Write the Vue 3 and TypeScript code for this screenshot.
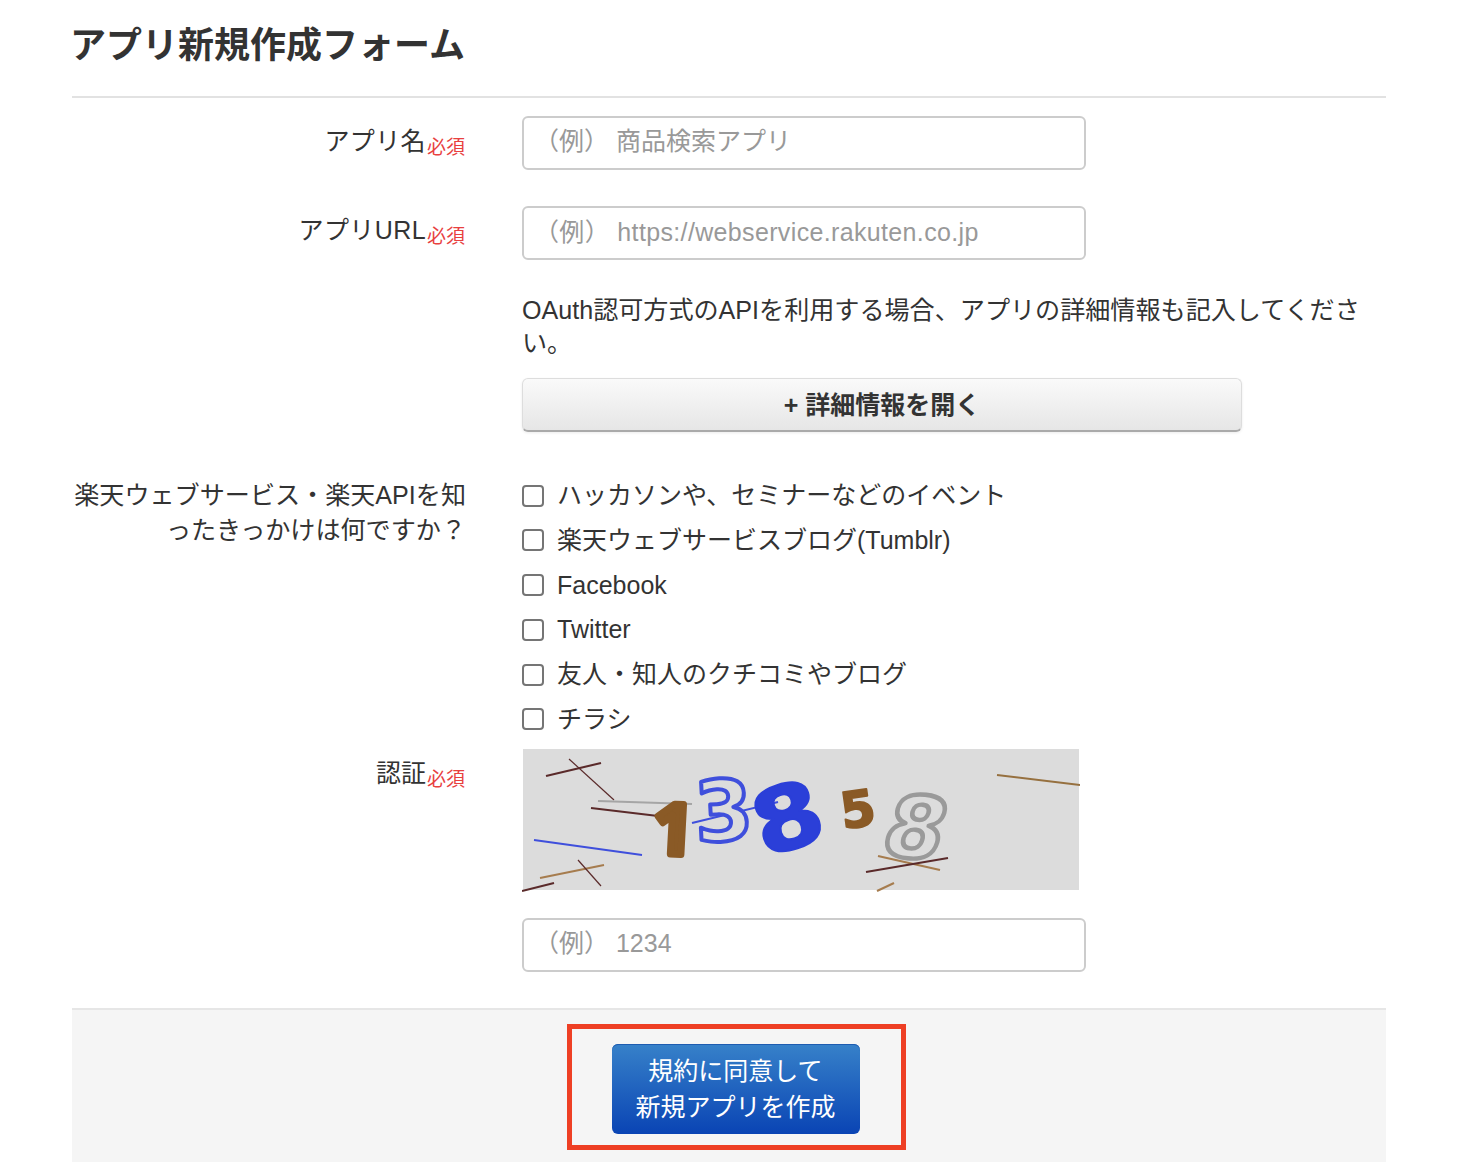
<script setup lang="ts">
const sources: string[] = [
  'ハッカソンや、セミナーなどのイベント',
  '楽天ウェブサービスブログ(Tumblr)',
  'Facebook',
  'Twitter',
  '友人・知人のクチコミやブログ',
  'チラシ',
]
const noise = [
  { d: 'M546 776 L601 763', c: '#5a2a2a', w: 2 },
  { d: 'M569 759 L614 800', c: '#5a2a2a', w: 1.2 },
  { d: 'M598 801 L692 804', c: '#a5a5a5', w: 2 },
  { d: 'M591 808 L658 816', c: '#5a2a2a', w: 2 },
  { d: 'M534 840 L642 855', c: '#3f4fdc', w: 2 },
  { d: 'M692 823 L778 802', c: '#3f4fdc', w: 2 },
  { d: 'M540 878 L604 865', c: '#a67c4e', w: 2 },
  { d: 'M578 860 L601 886', c: '#5a2a2a', w: 1.2 },
  { d: 'M522 891 L554 883', c: '#5a2a2a', w: 2 },
  { d: 'M997 775 L1080 785', c: '#96703f', w: 2 },
  { d: 'M878 856 L940 870', c: '#a67c4e', w: 2 },
  { d: 'M866 872 L948 858', c: '#5a2a2a', w: 2 },
  { d: 'M877 891 L894 883', c: '#a67c4e', w: 2 },
]
</script>

<template>
  <div class="page">
    <h1 class="title">アプリ新規作成フォーム</h1>

    <form class="form" @submit.prevent>
      <div class="row first">
        <label class="label wide">アプリ名<span class="req">必須</span></label>
        <div class="control"><input class="field" type="text" placeholder="（例） 商品検索アプリ" /></div>
      </div>

      <div class="row url">
        <label class="label wide url-label">アプリURL<span class="req">必須</span></label>
        <div class="control"><input class="field field-url" type="text" placeholder="（例） https://webservice.rakuten.co.jp" /></div>
      </div>

      <div class="row oauth">
        <div></div>
        <div class="control">
          <p class="note">OAuth認可方式のAPIを利用する場合、アプリの詳細情報も記入してください。</p>
          <button class="detail" type="button">+ 詳細情報を開く</button>
        </div>
      </div>

      <div class="row sources">
        <label class="label multi">楽天ウェブサービス・楽天APIを知ったきっかけは何ですか？</label>
        <div class="control checks">
          <label v-for="s in sources" :key="s" class="check">
            <input type="checkbox" class="box" />
            <span>{{ s }}</span>
          </label>
        </div>
      </div>

      <div class="row captcha-row">
        <label class="label captcha-label">認証<span class="req">必須</span></label>
        <div class="control">
          <svg class="captcha" viewBox="522 749 558 143" width="558" height="143" role="img" aria-label="認証画像">
            <rect x="523" y="749" width="556" height="141" fill="#dcdcdc" />
            <path v-for="(n, i) in noise" :key="i" :d="n.d" :stroke="n.c" :stroke-width="n.w" fill="none" />
            <text class="digit round sans" transform="translate(652 853) rotate(3)" font-size="70" fill="#8a5a26" stroke="#8a5a26" stroke-width="7">1</text>
            <text class="digit round" transform="translate(696 842) rotate(-3)" font-size="84" fill="#dcdcdc" stroke="#3f4fdc" stroke-width="4">3</text>
            <text class="digit round" transform="translate(764 858) rotate(-18) scale(1.14 1)" font-size="88" fill="#2b3fd8" stroke="#2b3fd8" stroke-width="2">8</text>
            <text class="digit round" transform="translate(843 829) rotate(-8)" font-size="50" fill="#8a5a26" stroke="#8a5a26" stroke-width="2">5</text>
            <text class="digit round" transform="translate(878 854) rotate(6) skewX(-10)" font-size="86" fill="#dcdcdc" stroke="#9a9a9a" stroke-width="4.5">8</text>
          </svg>
          <input class="field code" type="text" placeholder="（例） 1234" />
        </div>
      </div>

      <div class="footer">
        <div class="highlight">
          <button class="submit" type="submit">規約に同意して<br />新規アプリを作成</button>
        </div>
      </div>
    </form>
  </div>
</template>

<style>
html, body { margin: 0; background: #fff; }
</style>

<style scoped>
.page {
  height: 1162px;
  box-sizing: border-box;
  padding: 0 96px 0 72px;
  display: flex;
  flex-direction: column;
  overflow: hidden;
  color: #333;
  font-family: "Liberation Sans", "Noto Sans CJK JP", sans-serif;
  font-size: 25px;
}
.title {
  margin: 0 0 0 -2px;
  padding-top: 22px;
  height: 75px;
  box-sizing: border-box;
  font-size: 36px;
  line-height: 48px;
  font-weight: 700;
}
.form {
  flex: 1;
  display: flex;
  flex-direction: column;
  border-top: 2px solid #e2e2e2;
  margin-top: 21px;
}
.row {
  display: grid;
  grid-template-columns: 394px 1fr;
  column-gap: 56px;
}
.first { margin-top: 18px; }
.url { margin-top: 36px; }
.oauth { margin-top: 34px; }
.sources { margin-top: 45px; }
.captcha-row { margin-top: 12px; }
.label {
  text-align: right;
  line-height: 34px;
  padding-top: 8px;
  padding-right: 1px;
}
.label.wide { letter-spacing: 0.4px; }
.url-label { padding-top: 7px; }
.label.multi {
  padding: 1px 0 0;
  line-height: 35px;
  font-size: 25.1px;
}
.captcha-label { padding-top: 7px; }
.req {
  color: #e8403f;
  font-size: 19px;
  letter-spacing: 0;
  margin-left: 1px;
  position: relative;
  top: 4px;
}
.field {
  display: block;
  box-sizing: border-box;
  width: 564px;
  height: 54px;
  padding: 0 12px 3px 10px;
  border: 2px solid #ccc;
  border-radius: 6px;
  background: #fff;
  color: #333;
  font: inherit;
  outline: none;
}
.field-url {
  letter-spacing: 0.35px;
  padding-bottom: 1px;
}
.field::placeholder { color: #999; opacity: 1; }
.note {
  margin: 0;
  line-height: 33px;
  font-size: 25.1px;
}
.detail {
  display: block;
  width: 720px;
  height: 54px;
  margin-top: 18px;
  padding: 0 0 4px;
  border: 1px solid #ddd;
  border-bottom: 2px solid #aaa;
  border-radius: 6px;
  background: linear-gradient(#fafafa, #e6e6e6);
  box-shadow: 0 1px 3px rgba(0, 0, 0, 0.08);
  color: #333;
  font: inherit;
  font-weight: 700;
}
.checks {
  display: flex;
  flex-direction: column;
  gap: 8.8px;
}
.check {
  display: flex;
  align-items: center;
  gap: 13px;
  height: 36px;
  line-height: 36px;
}
.box {
  appearance: none;
  width: 22px;
  height: 22px;
  margin: 1px 0 0;
  box-sizing: border-box;
  border: 2px solid #757575;
  border-radius: 4px;
  background: #fff;
  flex: none;
}
.captcha { display: block; }
.code { margin-top: 26px; }
.footer {
  flex: 1;
  margin-top: 36px;
  border-top: 2px solid #e6e6e6;
  background: #f5f5f5;
  display: flex;
  justify-content: center;
  align-items: flex-start;
  padding: 14px 0 0 15px;
}
.highlight {
  box-sizing: border-box;
  width: 339px;
  height: 126px;
  border: 5px solid #ee3f24;
  display: flex;
  align-items: center;
  justify-content: center;
  padding: 4px 2px 0 0;
}
.submit {
  width: 248px;
  height: 90px;
  border: 0;
  border-radius: 6px;
  background: linear-gradient(#3781c9, #0a44b4);
  box-shadow: inset 0 1px 0 #1e5cb0;
  color: #fff;
  font: inherit;
  line-height: 35.5px;
  padding: 2px 0 0;
}
.digit {
  font-family: "DejaVu Sans", sans-serif;
  font-weight: 700;
}
.sans { font-family: "Open Sans", sans-serif; }
.round { stroke-linejoin: round; }
</style>
